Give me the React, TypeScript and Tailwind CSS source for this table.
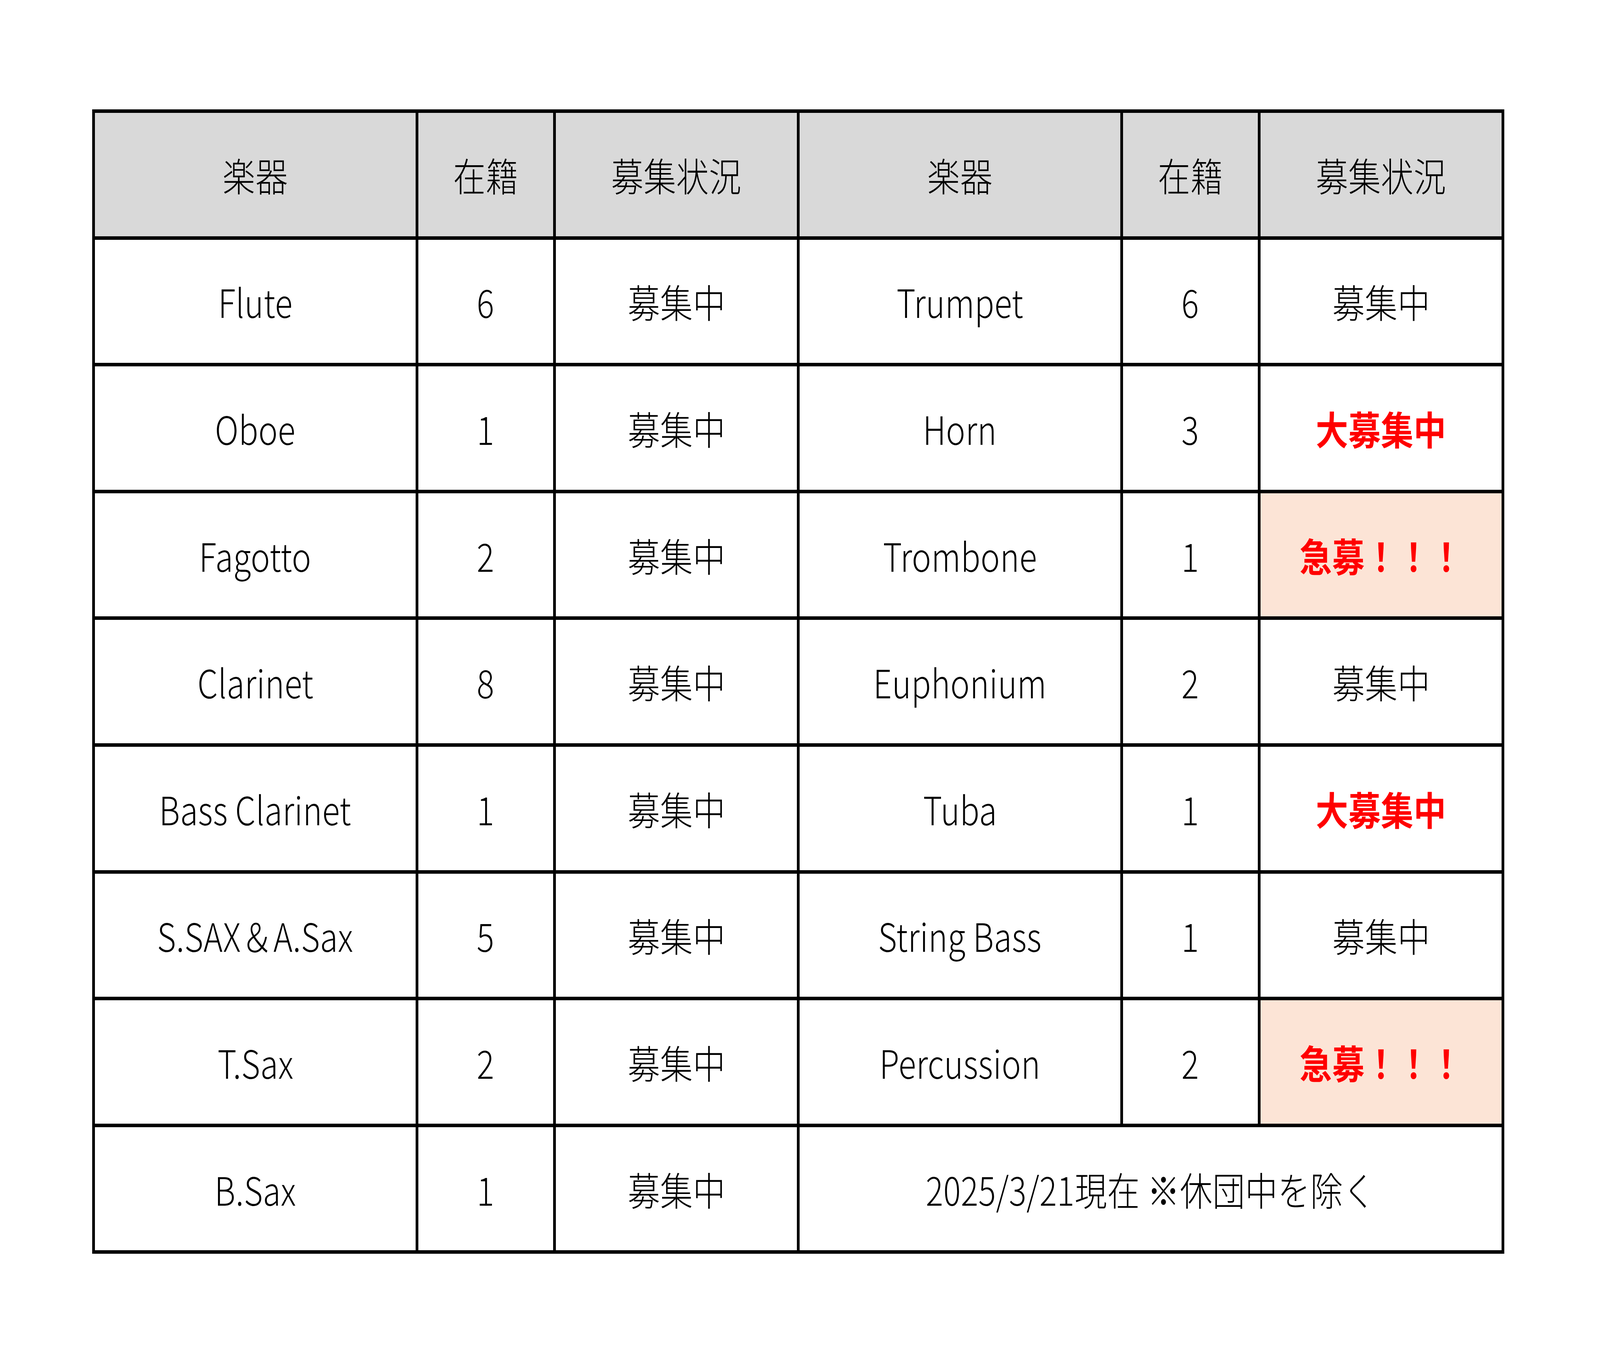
import { Fragment } from "react";

const font = '"Noto Sans CJK JP", "Noto Sans", sans-serif';

type Status = "normal" | "big" | "urgent";

type Row = {
  left: [string, string, Status];
  right?: [string, string, Status];
};

const rows: Row[] = [
  { left: ["Flute", "6", "normal"], right: ["Trumpet", "6", "normal"] },
  { left: ["Oboe", "1", "normal"], right: ["Horn", "3", "big"] },
  { left: ["Fagotto", "2", "normal"], right: ["Trombone", "1", "urgent"] },
  { left: ["Clarinet", "8", "normal"], right: ["Euphonium", "2", "normal"] },
  { left: ["Bass Clarinet", "1", "normal"], right: ["Tuba", "1", "big"] },
  { left: ["S.SAX＆A.Sax", "5", "normal"], right: ["String Bass", "1", "normal"] },
  { left: ["T.Sax", "2", "normal"], right: ["Percussion", "2", "urgent"] },
  { left: ["B.Sax", "1", "normal"] },
];

const statusText: Record<Status, string> = {
  normal: "募集中",
  big: "大募集中",
  urgent: "急募！！！",
};

function Txt({ children }: { children: React.ReactNode }) {
  return <span className="inline-block scale-x-[0.83] whitespace-nowrap">{children}</span>;
}

function Cell({
  children,
  className = "bg-white text-black font-light",
}: {
  children: React.ReactNode;
  className?: string;
}) {
  return (
    <div className={`flex items-center justify-center text-[100px] leading-none ${className}`}>
      <Txt>{children}</Txt>
    </div>
  );
}

function StatusCell({ s }: { s: Status }) {
  if (s === "normal") return <Cell>{statusText[s]}</Cell>;
  return (
    <Cell className={`font-bold text-[#ff0000] ${s === "urgent" ? "bg-[#fce4d6]" : "bg-white"}`}>
      {statusText[s]}
    </Cell>
  );
}

const heads = ["楽器", "在籍", "募集状況", "楽器", "在籍", "募集状況"];

export default function App() {
  return (
    <div className="min-h-screen bg-white" style={{ fontFamily: font }}>
      <div className="ml-[236px] pt-[280px]">
        <div className="grid w-max grid-cols-[821px_345px_617px_821px_345px_617px] grid-rows-[repeat(9,315.6px)] gap-x-[7px] gap-y-[9px] bg-black px-[7px] py-[9px] tracking-[0.04em]">
          {heads.map((h, i) => (
            <Cell key={i} className="bg-[#d9d9d9] font-light text-black">
              {h}
            </Cell>
          ))}
          {rows.map((r, i) => (
            <Fragment key={i}>
              <Cell>{r.left[0]}</Cell>
              <Cell>{r.left[1]}</Cell>
              <StatusCell s={r.left[2]} />
              {r.right ? (
                <>
                  <Cell>{r.right[0]}</Cell>
                  <Cell>{r.right[1]}</Cell>
                  <StatusCell s={r.right[2]} />
                </>
              ) : (
                <Cell className="col-span-3 bg-white font-light text-black">2025/3/21現在 ※休団中を除く</Cell>
              )}
            </Fragment>
          ))}
        </div>
      </div>
    </div>
  );
}
